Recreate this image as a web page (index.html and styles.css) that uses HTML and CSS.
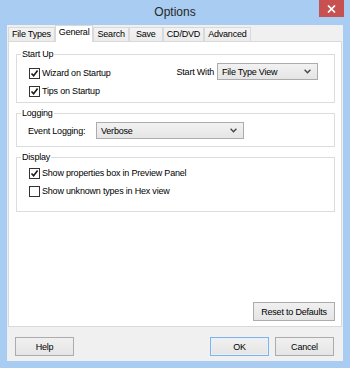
FILE: index.html
```html
<!doctype html>
<html lang="en">
  <head>
    <meta charset="UTF-8" />
    <meta name="viewport" content="width=device-width, initial-scale=1.0" />
    <title>Options</title>
    <link rel="stylesheet" href="styles.css">
  </head>
  <body>
    <div class="window">
      <div class="titlebar">
        <span></span>
        <span class="title">Options</span>
        <button class="close-btn" aria-label="Close">
          <svg width="9" height="8" viewBox="0 0 9 8">
            <path d="M1 0.5 L8 7.5 M8 0.5 L1 7.5" stroke="#fff" stroke-width="1.7" />
          </svg>
        </button>
      </div>

      <div class="client">
        <div class="tabs">
          <div class="tab">File Types</div>
          <div class="tab active">General</div>
          <div class="tab">Search</div>
          <div class="tab">Save</div>
          <div class="tab">CD/DVD</div>
          <div class="tab">Advanced</div>
        </div>

        <div class="panel">
          <fieldset class="group group-startup">
            <legend>Start Up</legend>
            <div class="startup-row">
              <div class="checks">
                <label class="check">
                  <span class="box"><svg width="9" height="9" viewBox="0 0 9 9"><path d="M1.5 4.5 L3.6 6.8 L7.6 1.6" fill="none" stroke="#1a1a1a" stroke-width="1.6" /></svg></span>
                  Wizard on Startup
                </label>
                <label class="check">
                  <span class="box"><svg width="9" height="9" viewBox="0 0 9 9"><path d="M1.5 4.5 L3.6 6.8 L7.6 1.6" fill="none" stroke="#1a1a1a" stroke-width="1.6" /></svg></span>
                  Tips on Startup
                </label>
              </div>
              <div class="start-with">
                <span>Start With</span>
                <div class="combo combo-start">
                  <span>File Type View</span>
                  <svg width="7" height="5" viewBox="0 0 7 5"><path d="M0.6 0.8 L3.5 3.8 L6.4 0.8" fill="none" stroke="#444" stroke-width="1.3" /></svg>
                </div>
              </div>
            </div>
          </fieldset>

          <fieldset class="group group-logging">
            <legend>Logging</legend>
            <div class="logging-row">
              <span class="field-label">Event Logging:</span>
              <div class="combo combo-log">
                <span>Verbose</span>
                <svg width="7" height="5" viewBox="0 0 7 5"><path d="M0.6 0.8 L3.5 3.8 L6.4 0.8" fill="none" stroke="#444" stroke-width="1.3" /></svg>
              </div>
            </div>
          </fieldset>

          <fieldset class="group group-display">
            <legend>Display</legend>
            <label class="check">
              <span class="box"><svg width="9" height="9" viewBox="0 0 9 9"><path d="M1.5 4.5 L3.6 6.8 L7.6 1.6" fill="none" stroke="#1a1a1a" stroke-width="1.6" /></svg></span>
              Show properties box in Preview Panel
            </label>
            <label class="check">
              <span class="box"></span>
              Show unknown types in Hex view
            </label>
          </fieldset>

          <button class="btn btn-reset">Reset to Defaults</button>
        </div>

        <div class="footer">
          <button class="btn">Help</button>
          <span class="spacer"></span>
          <button class="btn btn-default">OK</button>
          <button class="btn">Cancel</button>
        </div>
      </div>
    </div>
  </body>
</html>
```

FILE: styles.css
```css
* {
  box-sizing: border-box;
}

body {
  margin: 0;
  font-family: 'Liberation Sans', Arial, sans-serif;
  font-size: 9px;
  letter-spacing: -0.2px;
  color: #000;
}

.window {
  width: 350px;
  height: 368px;
  background-color: #a9ccf2;
  padding: 0 7px 7px;
  display: flex;
  flex-direction: column;
}

.titlebar {
  height: 25px;
  margin: 0 -7px;
  display: grid;
  grid-template-columns: 1fr auto 1fr;
  align-items: center;
}

.title {
  font-size: 12px;
  letter-spacing: 0;
  color: #262626;
  padding-bottom: 1px;
}

.close-btn {
  justify-self: end;
  align-self: start;
  width: 25px;
  height: 17px;
  margin-right: 6px;
  border: none;
  padding: 0;
  background-color: #c75050;
  display: flex;
  align-items: center;
  justify-content: center;
}

.client {
  flex-grow: 1;
  background-color: #f0f0f0;
  display: flex;
  flex-direction: column;
}

/* tab strip */
.tabs {
  height: 16px;
  padding-left: 1px;
  display: flex;
  align-items: flex-end;
}

.tab {
  height: 14px;
  min-width: 34px;
  padding: 0 3px;
  border: 1px solid #d9d9d9;
  border-bottom: none;
  background: linear-gradient(#f3f3f3, #ebebeb);
  line-height: 12px;
  text-align: center;
}

.tab.active {
  height: 17px;
  margin-bottom: -1px;
  background: #fff;
  line-height: 13px;
  position: relative;
  z-index: 1;
}

.panel {
  height: 286px;
  margin-left: 1px;
  width: 334px;
  background-color: #fff;
  border: 1px solid #d9d9d9;
  padding: 6px 6px 5px 7px;
  display: flex;
  flex-direction: column;
}

/* group boxes */
.group {
  margin: 0;
  min-width: 0;
  border: 1px solid #dcdcdc;
  padding: 0 0 0 4px;
}

.group + .group {
  margin-top: 4px;
}

.group legend {
  padding: 0 1px;
  line-height: 12px;
}

.group-startup {
  padding-top: 4px;
  padding-bottom: 2px;
}

.group-logging {
  padding-top: 3px;
  padding-bottom: 7px;
}

.group-display {
  padding-top: 1px;
  padding-bottom: 11px;
}

.startup-row {
  display: flex;
}

.start-with {
  margin-left: auto;
  margin-right: 16px;
  margin-top: -1px;
  align-self: flex-start;
  display: flex;
  align-items: center;
  gap: 3px;
}

.check {
  height: 18px;
  padding-left: 8px;
  display: flex;
  align-items: center;
  gap: 2px;
}

.box {
  width: 11px;
  height: 11px;
  border: 1px solid #333;
  background-color: #fff;
  display: flex;
  align-items: center;
  justify-content: center;
}

.logging-row {
  display: flex;
  align-items: center;
  padding-left: 7px;
}

.field-label {
  width: 68px;
}

/* drop-down lists */
.combo {
  height: 17px;
  border: 1px solid #acacac;
  background: linear-gradient(#f2f2f2, #e5e5e5);
  padding: 0 6px 0 4px;
  display: flex;
  align-items: center;
  justify-content: space-between;
}

.combo-start {
  width: 101px;
}

.combo-log {
  width: 148px;
}

/* buttons */
.btn {
  height: 19px;
  width: 59px;
  padding: 0;
  font: inherit;
  letter-spacing: inherit;
  color: #000;
  border: 1px solid #acacac;
  background: linear-gradient(#f0f0f0, #e5e5e5);
}

.btn-reset {
  width: 82px;
  margin-top: auto;
  align-self: flex-end;
}

.btn-default {
  border-color: #7eb4ea;
  box-shadow: inset 0 0 0 1px #e6f0fa;
}

.footer {
  display: flex;
  gap: 6px;
  padding: 10px 9px 0 8px;
}

.spacer {
  flex-grow: 1;
}
```
